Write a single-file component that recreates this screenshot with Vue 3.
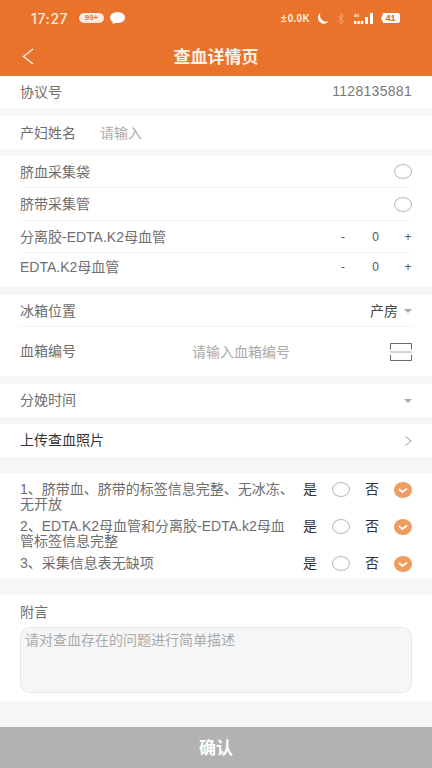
<script setup>
const checks = [
  { id: 1, text: '1、脐带血、脐带的标签信息完整、无冰冻、无开放' },
  { id: 2, text: '2、EDTA.K2母血管和分离胶-EDTA.k2母血管标签信息完整' },
  { id: 3, text: '3、采集信息表无缺项' }
]
const counters = ['分离胶-EDTA.K2母血管', 'EDTA.K2母血管']
</script>

<template>
  <div class="page">
    <header class="top">
      <div class="status">
        <span class="time">17:27</span>
        <span class="badge">99+</span>
        <svg class="bubble" width="15" height="12" viewBox="0 0 15 12">
          <ellipse cx="7.5" cy="5.5" rx="7.5" ry="5.5" fill="#fff" />
          <path d="M3 9l-.5 3L7 10.5Z" fill="#fff" />
        </svg>
        <span class="status-right">
          <span class="speed"><i class="down">±</i>0.0K</span>
          <svg class="moon" width="13" height="13" viewBox="0 0 14 14">
            <path d="M5 .8A6.4 6.4 0 1 0 13.6 10 6.8 6.8 0 0 1 5 .8Z" fill="#fff" />
          </svg>
          <svg class="bt" width="8" height="13" viewBox="0 0 9 14" fill="none">
            <path d="M1 4l6.5 6L4.5 13V1l3 3L1 10" stroke="#f2a87c" stroke-width="1" />
          </svg>
          <svg class="signal" width="19" height="11" viewBox="0 0 19 11" fill="#fff">
            <text x="0" y="3.6" font-size="4" font-weight="700" fill="#fff" font-family="Liberation Sans">4G</text>
            <rect x="0" y="8" width="2.4" height="3" />
            <rect x="3.4" y="8" width="2.4" height="3" />
            <rect x="6.8" y="8" width="2.4" height="3" />
            <rect x="11" y="4" width="3" height="7" />
            <rect x="16" y="0" width="3" height="11" />
          </svg>
          <span class="battery">41</span>
        </span>
      </div>
      <div class="nav">
        <svg class="back" width="12" height="17" viewBox="0 0 12 17" fill="none">
          <path d="M11 1 1.5 8.5 11 16" stroke="#fbeadf" stroke-width="1.5" />
        </svg>
        <h1 class="title">查血详情页</h1>
      </div>
    </header>

    <section class="card row first">
      <span class="label">协议号</span>
      <span class="value">1128135881</span>
    </section>

    <section class="card row name-row">
      <span class="label">产妇姓名</span>
      <span class="placeholder name-input">请输入</span>
    </section>

    <section class="card group">
      <div class="line line-a">
        <span class="label">脐血采集袋</span>
        <span class="circle"></span>
      </div>
      <div class="line line-b">
        <span class="label">脐带采集管</span>
        <span class="circle"></span>
      </div>
      <div v-for="name in counters" :key="name" class="line line-n">
        <span class="label">{{ name }}</span>
        <span class="stepper">
          <span>-</span>
          <span class="num">0</span>
          <span>+</span>
        </span>
      </div>
    </section>

    <section class="card group">
      <div class="line line-c">
        <span class="label">冰箱位置</span>
        <span class="select">产房<i class="caret"></i></span>
      </div>
      <div class="line line-d">
        <span class="label">血箱编号</span>
        <span class="placeholder box-input">请输入血箱编号</span>
        <svg width="22" height="18" viewBox="0 0 22 18" fill="none" stroke="#666" stroke-width="1">
          <path d="M.5 6.5V.5h21v6M.5 12v5.5h21V12" />
          <path d="M0 9h22" stroke="#aaa" />
        </svg>
      </div>
    </section>

    <section class="card row single">
      <span class="label">分娩时间</span>
      <i class="caret"></i>
    </section>

    <section class="card row single upload">
      <span class="label dark">上传查血照片</span>
      <svg width="7" height="10" viewBox="0 0 7 10" fill="none">
        <path d="M.5.5 6.2 5 .5 9.5" stroke="#999" stroke-width="1" />
      </svg>
    </section>

    <section class="card checks">
      <div v-for="item in checks" :key="item.id" class="check">
        <p class="check-text">{{ item.text }}</p>
        <span class="opt">是</span>
        <span class="circle"></span>
        <span class="opt no">否</span>
        <svg class="tick" width="18" height="16" viewBox="0 0 18 16">
          <ellipse cx="9" cy="8" rx="9" ry="8" fill="#ee9c5f" />
          <path d="M5 7l3.5 3L13 6.5" fill="none" stroke="#fff" stroke-width="1.8" />
        </svg>
      </div>
    </section>

    <section class="card note">
      <div class="label">附言</div>
      <div class="textarea">请对查血存在的问题进行简单描述</div>
    </section>

    <footer class="confirm">确认</footer>
  </div>
</template>

<style scoped>
.page {
  position: relative;
  display: flex;
  flex-direction: column;
  width: 432px;
  height: 768px;
  overflow: hidden;
  background: #f6f6f6;
  font-family: "Liberation Sans", "Noto Sans CJK SC", sans-serif;
  color: #666;
}

.top {
  height: 76px;
  flex-shrink: 0;
  background: #e9732b;
  color: #fff;
}

.status {
  display: flex;
  align-items: center;
  height: 36px;
  padding: 0 32px 0 31px;
}

.time {
  width: 42px;
  font-family: "Inter", sans-serif;
  font-size: 14px;
  font-weight: 500;
  letter-spacing: 0.6px;
  white-space: nowrap;
  color: #fbeadf;
}

.badge {
  margin-left: 6px;
  width: 25px;
  height: 10px;
  line-height: 10px;
  text-align: center;
  border-radius: 6px;
  background: #fbeadf;
  color: #d9803f;
  font-size: 8px;
  font-weight: 700;
}

.bubble {
  margin-left: 6px;
}

.status-right {
  margin-left: auto;
  display: flex;
  align-items: center;
}

.speed {
  font-size: 10px;
  font-weight: 700;
  letter-spacing: 0.3px;
  color: #fbeadf;
}

.down {
  font-style: normal;
  margin-right: 1px;
}

.moon {
  margin-left: 6px;
}

.bt {
  margin-left: 8px;
}

.signal {
  margin-left: 9px;
}

.battery {
  margin-left: 8px;
  width: 19px;
  height: 10px;
  line-height: 10px;
  text-align: center;
  border-radius: 2px;
  background: #fff;
  color: #c96a2c;
  font-size: 9px;
  font-weight: 700;
  clip-path: polygon(12% 0, 100% 0, 100% 100%, 12% 100%, 0 55%);
}

.nav {
  position: relative;
  display: flex;
  align-items: center;
  justify-content: center;
  height: 40px;
}

.back {
  position: absolute;
  left: 22px;
  top: 12px;
}

.title {
  margin: -2px 0 0;
  font-size: 17px;
  font-weight: 700;
  color: #fdf0e6;
}

.card {
  background: #fff;
  flex-shrink: 0;
}

.row {
  display: flex;
  align-items: center;
  justify-content: space-between;
  padding: 0 20px;
}

.first {
  height: 32px;
  margin-bottom: 8px;
}

.name-row {
  height: 33px;
  margin-bottom: 7px;
  justify-content: flex-start;
}

.single {
  height: 33px;
  margin-bottom: 7px;
}

.upload {
  margin-bottom: 16px;
}

.label {
  margin-top: -2px;
  font-size: 14px;
  color: #6e6e6e;
}

.single .label,
.line-d .label {
  margin-top: -4px;
}

.label.dark {
  color: #333;
}

.value {
  margin-top: -2px;
  font-size: 14px;
  letter-spacing: 0.3px;
  color: #777;
}

.placeholder {
  margin-top: -2px;
  font-size: 14px;
  color: #aaa;
}

.name-input {
  margin-left: 24px;
}

.group {
  padding: 0 20px;
  margin-bottom: 8px;
}

.line {
  display: flex;
  align-items: center;
  justify-content: space-between;
  box-sizing: border-box;
  border-bottom: 1px solid #f3f3f3;
}

.line:last-child {
  border-bottom: 0;
}

.line-a {
  height: 32px;
}

.line-b {
  height: 33px;
}

.line-n {
  height: 32px;
}

.line-n:last-child {
  height: 34px;
  padding-bottom: 7px;
}

.line-c {
  height: 32px;
}

.line-d {
  height: 49px;
}

.box-input {
  margin-left: 116px;
  margin-right: auto;
}

.circle {
  width: 18px;
  height: 15px;
  box-sizing: border-box;
  border: 1px solid #bbb;
  border-radius: 50%;
  flex-shrink: 0;
}

.stepper {
  display: grid;
  grid-template-columns: 8px 57px 8px;
  align-items: center;
  text-align: center;
  font-size: 12px;
  color: #555;
}

.select {
  display: flex;
  align-items: center;
  gap: 6px;
  margin-top: -2px;
  font-size: 14px;
  color: #444;
}

.select .caret {
  margin-top: 2px;
}

.caret {
  width: 0;
  height: 0;
  border-left: 4px solid transparent;
  border-right: 4px solid transparent;
  border-top: 4px solid #aaa;
}

.checks {
  padding: 9px 20px 0;
  height: 106px;
  box-sizing: border-box;
  margin-bottom: 16px;
}

.check {
  display: flex;
  align-items: flex-start;
  height: 37px;
}

.check:last-child {
  height: 23px;
}

.check-text {
  width: 275px;
  margin: 0;
  font-size: 14px;
  line-height: 15px;
  color: #6e6e6e;
}

.opt {
  width: 14px;
  margin-left: 8px;
  font-size: 14px;
  line-height: 15px;
  color: #333;
}

.check .circle {
  margin-left: 15px;
}

.opt.no {
  margin-left: 15px;
}

.tick {
  margin-left: 15px;
  flex-shrink: 0;
}

.note {
  height: 106px;
  box-sizing: border-box;
  padding: 8px 20px 0;
}

.textarea {
  margin-top: 6px;
  height: 66px;
  box-sizing: border-box;
  padding: 1px 4px;
  border: 1px solid #e8e8e8;
  border-radius: 10px;
  background: #f6f6f6;
  font-size: 14px;
  color: #aaa;
}

.confirm {
  position: absolute;
  left: 0;
  right: 0;
  bottom: 0;
  height: 41px;
  line-height: 43px;
  text-align: center;
  background: #b2b2b2;
  color: #fff;
  font-size: 17px;
  font-weight: 700;
}
</style>
